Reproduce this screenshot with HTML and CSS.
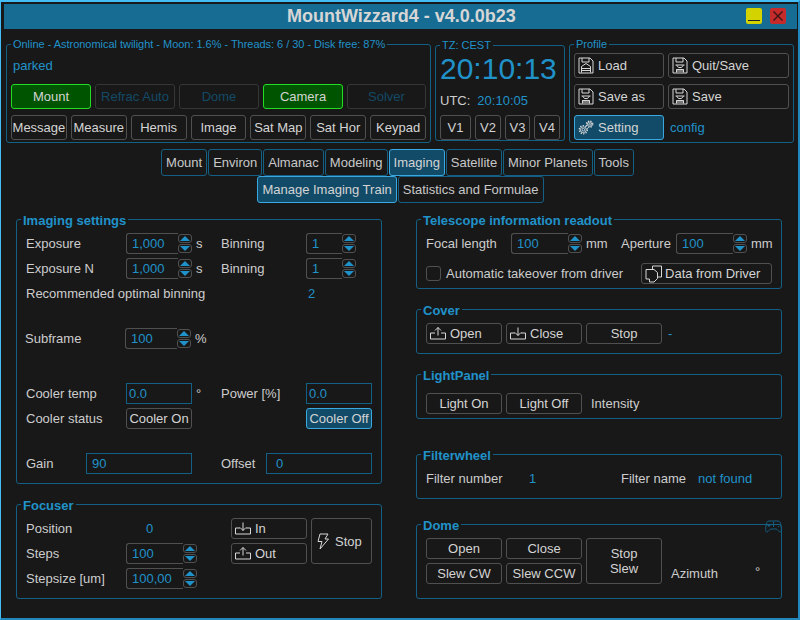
FILE: index.html
```html
<!DOCTYPE html>
<html lang="en">
<head>
    <meta charset="UTF-8">
    <meta name="viewport" content="width=device-width, initial-scale=1.0">
    <title>MountWizzard4</title>
    <link rel="stylesheet" href="styles.css">
</head>
<body>
    <svg class="sprite" width="0" height="0">
        <symbol id="i-load" viewBox="0 0 16 17">
            <path d="M1 1h11l3 3v12H1z M4 1v4h7V1 M3.500 15.500v-6L8 6.500l4.500 3v6 M3.500 11.500h9 M3.500 13.500h9"/>
        </symbol>
        <symbol id="i-save" viewBox="0 0 16 17">
            <path d="M1 1h11l3 3v12H1z M4 1v4h7V1 M3.500 8h9 M4.500 8l2 2.500h3l2-2.500 M4.500 15.500v-3h7v3 M4.500 12.500h7 M4 14h8"/>
        </symbol>
        <symbol id="i-gears" viewBox="0 0 18 17">
            <circle cx="6" cy="11" r="1.500"/>
            <circle cx="6" cy="11" r="3.300"/>
            <circle cx="6" cy="11" r="4.600" class="teeth"/>
            <circle cx="13" cy="4.800" r="1"/>
            <circle cx="13" cy="4.800" r="2.500"/>
            <circle cx="13" cy="4.800" r="3.600" class="teeth"/>
        </symbol>
        <symbol id="i-down" viewBox="0 0 16 13">
            <path d="M5 6H.5v6h15V6H11 M8 .5v8 M5 5.500l3 3 3-3"/>
        </symbol>
        <symbol id="i-up" viewBox="0 0 16 13">
            <path d="M5 6H.5v6h15V6H11 M8 8.500v-8 M5 3.500l3-3 3 3"/>
        </symbol>
        <symbol id="i-bolt" viewBox="0 0 12 17">
            <path d="M3 1h8L8 6h3.500L3 16l2-7.500H1z"/>
        </symbol>
        <symbol id="i-copy" viewBox="0 0 17 18">
            <path d="M7.500 1h9v11h-4 M7.500 1v3.500 M1 4.500h8l3.500 3v6L9 17H4.500v-3H1z"/>
        </symbol>
        <symbol id="i-pad" viewBox="0 0 17 13">
            <path d="M4 1h9c2 0 2.500 2 3 5s.5 6-1 6-2.500-3-4-3H6c-1.500 0-2.500 3-4 3S.5 9 1 6s1-5 3-5z M4 4v3 M2.500 5.500h3 M11 4.500h1 M13 6.500h1 M8.500 2v5"/>
        </symbol>
    </svg>

    <div class="window">
        <div class="titlebar">
            <span class="title">MountWizzard4 - v4.0.0b23</span>
            <button class="win-btn win-min"><span></span></button>
            <button class="win-btn win-close">
                <svg viewBox="0 0 16 16" width="16" height="16"><path d="M3.500 3.500l9 9 M12.500 3.500l-9 9"/></svg>
            </button>
        </div>

        <div class="top">
            <div class="group status">
                <div class="legend small long">Online - Astronomical twilight - Moon: 1.6% - Threads: 6 / 30 - Disk free: 87%</div>
                <div class="value parked">parked</div>
                <div class="btn-row five">
                    <button class="btn on">Mount</button>
                    <button class="btn off">Refrac Auto</button>
                    <button class="btn off">Dome</button>
                    <button class="btn on">Camera</button>
                    <button class="btn off">Solver</button>
                </div>
                <div class="btn-row">
                    <button class="btn tight">Message</button>
                    <button class="btn tight">Measure</button>
                    <button class="btn tight">Hemis</button>
                    <button class="btn tight">Image</button>
                    <button class="btn tight">Sat Map</button>
                    <button class="btn tight">Sat Hor</button>
                    <button class="btn tight">Keypad</button>
                </div>
            </div>

            <div class="group clock">
                <div class="legend small">TZ: CEST</div>
                <div class="value time">20:10:13</div>
                <div class="utc"><span>UTC:</span><span class="value">20:10:05</span></div>
                <div class="views">
                    <button class="btn">V1</button>
                    <button class="btn">V2</button>
                    <button class="btn">V3</button>
                    <button class="btn">V4</button>
                </div>
            </div>

            <div class="group profile">
                <div class="legend small">Profile</div>
                <button class="btn icon-btn"><svg class="ico"><use href="#i-load"/></svg>Load</button>
                <button class="btn icon-btn"><svg class="ico"><use href="#i-save"/></svg>Quit/Save</button>
                <button class="btn icon-btn"><svg class="ico"><use href="#i-save"/></svg>Save as</button>
                <button class="btn icon-btn"><svg class="ico"><use href="#i-save"/></svg>Save</button>
                <button class="btn icon-btn active"><svg class="ico"><use href="#i-gears"/></svg>Setting</button>
                <div class="value config">config</div>
            </div>
        </div>

        <div class="tabs">
            <div class="tab">Mount</div>
            <div class="tab">Environ</div>
            <div class="tab">Almanac</div>
            <div class="tab">Modeling</div>
            <div class="tab selected">Imaging</div>
            <div class="tab">Satellite</div>
            <div class="tab">Minor Planets</div>
            <div class="tab">Tools</div>
        </div>
        <div class="tabs sub">
            <div class="tab selected">Manage Imaging Train</div>
            <div class="tab">Statistics and Formulae</div>
        </div>

        <div class="columns">
            <div class="col">
                <div class="group imaging">
                    <div class="legend">Imaging settings</div>

                    <div class="lbl">Exposure</div>
                    <div class="spin"><div class="spin-val">1,000</div><div class="arrows"><i class="up"></i><i class="dn"></i></div></div>
                    <div class="lbl unit">s</div>
                    <div class="lbl">Binning</div>
                    <div class="spin short"><div class="spin-val">1</div><div class="arrows"><i class="up"></i><i class="dn"></i></div></div>

                    <div class="lbl">Exposure N</div>
                    <div class="spin"><div class="spin-val">1,000</div><div class="arrows"><i class="up"></i><i class="dn"></i></div></div>
                    <div class="lbl unit">s</div>
                    <div class="lbl">Binning</div>
                    <div class="spin short"><div class="spin-val">1</div><div class="arrows"><i class="up"></i><i class="dn"></i></div></div>

                    <div class="lbl span4">Recommended optimal binning</div>
                    <div class="lbl value bin-val">2</div>

                    <div class="spacer"></div>

                    <div class="lbl shift">Subframe</div>
                    <div class="spin shift"><div class="spin-val">100</div><div class="arrows"><i class="up"></i><i class="dn"></i></div></div>
                    <div class="lbl unit shift span3">%</div>

                    <div class="spacer"></div>

                    <div class="lbl">Cooler temp</div>
                    <div class="field">0.0</div>
                    <div class="lbl unit">°</div>
                    <div class="lbl">Power [%]</div>
                    <div class="field">0.0</div>

                    <div class="lbl">Cooler status</div>
                    <button class="btn">Cooler On</button>
                    <div class="span2"></div>
                    <button class="btn active">Cooler Off</button>

                    <div class="spacer"></div>

                    <div class="gain">
                        <div class="lbl">Gain</div>
                        <div class="field pad-s">90</div>
                        <div></div>
                        <div class="lbl">Offset</div>
                        <div class="field pad">0</div>
                    </div>
                </div>

                <div class="group focuser">
                    <div class="legend">Focuser</div>

                    <div class="lbl">Position</div>
                    <div class="lbl value pos-val">0</div>
                    <div></div>
                    <button class="btn icon-btn"><svg class="ico tray"><use href="#i-down"/></svg>In</button>
                    <button class="btn icon-btn stop"><svg class="ico bolt"><use href="#i-bolt"/></svg>Stop</button>

                    <div class="lbl">Steps</div>
                    <div class="spin"><div class="spin-val">100</div><div class="arrows"><i class="up"></i><i class="dn"></i></div></div>
                    <div></div>
                    <button class="btn icon-btn"><svg class="ico tray"><use href="#i-up"/></svg>Out</button>

                    <div class="lbl">Stepsize [um]</div>
                    <div class="spin"><div class="spin-val">100,00</div><div class="arrows"><i class="up"></i><i class="dn"></i></div></div>
                </div>
            </div>

            <div class="col">
                <div class="group telescope">
                    <div class="legend">Telescope information readout</div>
                    <div class="scope-row">
                        <div class="lbl">Focal length</div>
                        <div class="spin"><div class="spin-val">100</div><div class="arrows"><i class="up"></i><i class="dn"></i></div></div>
                        <div class="lbl unit">mm</div>
                        <div class="lbl">Aperture</div>
                        <div class="spin"><div class="spin-val">100</div><div class="arrows"><i class="up"></i><i class="dn"></i></div></div>
                        <div class="lbl unit">mm</div>
                    </div>
                    <div class="driver-row">
                        <div class="check"></div>
                        <div class="lbl">Automatic takeover from driver</div>
                        <button class="btn icon-btn driver"><svg class="ico copy"><use href="#i-copy"/></svg>Data from Driver</button>
                    </div>
                </div>

                <div class="group cover">
                    <div class="legend">Cover</div>
                    <button class="btn icon-btn"><svg class="ico tray"><use href="#i-up"/></svg>Open</button>
                    <button class="btn icon-btn"><svg class="ico tray"><use href="#i-down"/></svg>Close</button>
                    <button class="btn">Stop</button>
                    <div class="lbl value dash">-</div>
                </div>

                <div class="group light">
                    <div class="legend">LightPanel</div>
                    <button class="btn">Light On</button>
                    <button class="btn">Light Off</button>
                    <div class="lbl intensity">Intensity</div>
                </div>

                <div class="group filter">
                    <div class="legend">Filterwheel</div>
                    <div class="lbl">Filter number</div>
                    <div class="lbl value">1</div>
                    <div class="lbl">Filter name</div>
                    <div class="lbl value">not found</div>
                </div>

                <div class="group dome">
                    <div class="legend">Dome</div>
                    <svg class="pad-ico"><use href="#i-pad"/></svg>
                    <button class="btn">Open</button>
                    <button class="btn">Close</button>
                    <button class="btn stop-slew">Stop<br>Slew</button>
                    <div></div>
                    <button class="btn">Slew CW</button>
                    <button class="btn">Slew CCW</button>
                    <div class="az">
                        <div class="lbl">Azimuth</div>
                        <div class="az-deg">°</div>
                    </div>
                </div>
            </div>
        </div>
    </div>
</body>
</html>
```

FILE: styles.css
```css
* {
    box-sizing: border-box;
}

body {
    margin: 0;
    background-color: #181818;
    color: #cdcdcd;
    font-family: "Liberation Sans", Arial, sans-serif;
    font-size: 13px;
}

.sprite {
    position: absolute;
}

symbol path,
symbol circle {
    fill: none;
    stroke: currentColor;
    stroke-width: 1;
}

symbol .teeth {
    stroke-width: 1.4;
    stroke-dasharray: 1.5 1.4;
}

.window {
    width: 800px;
    height: 620px;
    overflow: hidden;
    background-color: #181818;
    border: 2px solid #2088bc;
    border-top-color: #44bdf6;
    border-left-color: #44bdf6;
    border-left-width: 1px;
}

.titlebar {
    position: relative;
    display: flex;
    align-items: center;
    justify-content: flex-end;
    gap: 8px;
    height: 25px;
    margin: 2px 1px 0 3px;
    padding: 0 11px 1px 0;
    background-color: #176c93;
}

.title {
    position: absolute;
    left: 283px;
    top: 2px;
    font-size: 18px;
    line-height: 21px;
    font-weight: bold;
    color: #d6d6d6;
    white-space: nowrap;
}

.win-btn {
    display: flex;
    align-items: flex-end;
    justify-content: center;
    width: 16px;
    height: 16px;
    padding: 0;
    border: none;
    border-radius: 2px;
}

.win-min {
    background-color: #d3d300;
}

.win-min span {
    width: 12px;
    height: 1px;
    margin-bottom: 3px;
    background-color: #222;
}

.win-close {
    background-color: #c62b2b;
}

.win-close path {
    fill: none;
    stroke: #3a1414;
    stroke-width: 1.4;
}

.top {
    display: flex;
    align-items: flex-start;
    gap: 4px;
    margin: 15px 0 0 5px;
}

.group {
    position: relative;
    border: 1px solid #145f84;
    border-radius: 3px;
}

.legend {
    position: absolute;
    left: 4px;
    top: -7px;
    padding: 0 2px;
    line-height: 15px;
    font-weight: bold;
    color: #2092ca;
    background-color: #181818;
    white-space: nowrap;
}

.legend.small {
    top: -8px;
    font-size: 11px;
    font-weight: normal;
}

.legend.long {
    letter-spacing: -0.03px;
}

.value {
    color: #2092ca;
}

.btn {
    height: 21px;
    padding: 0;
    font-family: inherit;
    font-size: 13px;
    color: #d4d4d4;
    background-color: #181818;
    border: 1px solid #505050;
    border-radius: 3px;
    white-space: nowrap;
}

.btn.on {
    background-color: #005400;
    border-color: #22dd22;
}

.btn.off {
    color: #134a66;
    border-color: #363636;
}

.btn.active {
    background-color: #124b68;
    border-color: #3aa9e2;
}

.icon-btn {
    display: flex;
    align-items: center;
    padding-left: 3px;
    gap: 4px;
}

.ico {
    width: 16px;
    height: 17px;
    flex: none;
    color: #d8d8d8;
}

.ico.tray {
    height: 13px;
}

.ico.bolt {
    width: 12px;
}

.ico.copy {
    width: 17px;
    height: 18px;
}

/* top row */
.status {
    width: 425px;
    height: 99px;
    padding: 13px 4px 0;
}

.parked {
    padding-left: 2px;
    line-height: 15px;
    margin-bottom: 11px;
}

.btn-row {
    display: flex;
    gap: 4px;
    margin-bottom: 6px;
}

.btn-row .btn {
    flex: 1 1 0;
    height: 25px;
    min-width: 0;
}

.btn-row.five {
    display: grid;
    grid-template-columns: 80px 80px 80px 80px 79px;
}

.clock {
    width: 130px;
    height: 96px;
    margin-top: 1px;
    padding: 6px 4px 0;
}

.time {
    font-size: 30px;
    line-height: 34px;
}

.utc {
    display: flex;
    gap: 7px;
    margin-top: 7px;
    line-height: 15px;
}

.views {
    display: grid;
    grid-template-columns: 31px 26px 25px 26px;
    gap: 4px;
    margin-top: 7px;
}

.views .btn {
    height: 25px;
}

.profile {
    display: grid;
    grid-template-columns: 90px 121px;
    grid-auto-rows: 25px;
    gap: 6px 4px;
    width: 225px;
    height: 99px;
    padding: 8px 4px 0;
}

.profile .btn {
    height: 25px;
}

.config {
    padding-left: 2px;
    line-height: 25px;
}

/* tabs */
.tabs {
    display: flex;
    justify-content: center;
    gap: 1px;
    margin-top: 6px;
    padding-right: 4px;
}

.tabs.sub {
    margin-top: 0;
    padding: 0 0 0 2px;
}

.tab {
    height: 27px;
    padding: 0 4px;
    line-height: 26px;
    color: #c8c8c8;
    border: 1px solid #145f84;
    border-radius: 3px;
}

.tab.selected {
    color: #d4d4d4;
    background-color: #124b68;
    border-color: #3aa9e2;
}

/* main columns */
.columns {
    display: flex;
    gap: 34px;
    margin: 16px 0 0 15px;
}

.col {
    width: 366px;
}

.lbl {
    line-height: 21px;
    white-space: nowrap;
}

.unit {
    padding-left: 4px;
}

.spin {
    display: flex;
    height: 21px;
}

.spin-val {
    flex: 1;
    padding-left: 5px;
    line-height: 19px;
    color: #2092ca;
    border: 1px solid #505050;
    border-right: none;
    border-radius: 3px 0 0 3px;
}

.arrows {
    display: flex;
    flex-direction: column;
    justify-content: space-between;
    width: 14px;
    padding: 1px 0;
}

.arrows i {
    display: block;
    position: relative;
    height: 9px;
    border: 1px solid #505050;
    border-radius: 3px;
}

.arrows i::after {
    content: "";
    position: absolute;
    left: 1px;
    border-left: 5px solid transparent;
    border-right: 5px solid transparent;
}

.arrows .up::after {
    top: 1px;
    border-bottom: 5px solid #2092ca;
}

.arrows .dn::after {
    top: 1px;
    border-top: 5px solid #2092ca;
}

.field {
    height: 21px;
    padding-left: 2px;
    line-height: 19px;
    color: #2092ca;
    border: 1px solid #145f84;
}

.field.pad {
    padding-left: 9px;
}

.field.pad-s {
    padding-left: 5px;
}

.imaging {
    display: grid;
    grid-template-columns: 100px 66px 29px 85px 66px;
    grid-template-rows: 21px 21px 21px 16px 21px 26px 21px 21px 16px 21px;
    row-gap: 4px;
    height: 265px;
    padding: 13px 0 0 9px;
}

.imaging .spin.short {
    width: 50px;
}

.span4 {
    grid-column: span 4;
}

.span3 {
    grid-column: span 3;
}

.span2 {
    grid-column: span 2;
}

.spacer {
    grid-column: 1 / -1;
}

.bin-val {
    padding-left: 2px;
}

.shift {
    position: relative;
    left: -1px;
}

.gain {
    grid-column: 1 / -1;
    display: grid;
    grid-template-columns: 60px 106px 29px 45px 106px;
}

.focuser {
    display: grid;
    grid-template-columns: 100px 71px 34px 76px 61px;
    grid-template-rows: 21px 21px 21px;
    row-gap: 4px;
    height: 95px;
    margin-top: 20px;
    padding: 13px 0 0 9px;
}

.pos-val {
    padding-left: 20px;
}

.stop {
    grid-row: span 2;
    gap: 6px;
    height: 46px;
    width: 61px;
    margin-left: 4px;
    padding-left: 5px;
}

.telescope {
    height: 70px;
    padding: 13px 0 0 9px;
}

.scope-row {
    display: grid;
    grid-template-columns: 85px 71px 39px 55px 71px auto;
}

.driver-row {
    display: flex;
    margin-top: 9px;
}

.check {
    width: 15px;
    height: 15px;
    margin: 3px 5px 0 0;
    border: 1px solid #505050;
    border-radius: 3px;
}

.driver {
    gap: 3px;
    width: 131px;
    margin-left: 18px;
}

.cover,
.light {
    display: grid;
    grid-template-columns: 76px 76px 76px auto;
    column-gap: 4px;
    height: 45px;
    margin-top: 20px;
    padding: 13px 0 0 9px;
}

.light {
    padding-top: 18px;
}

.dash {
    padding-left: 2px;
}

.intensity {
    padding-left: 5px;
}

.filter {
    display: grid;
    grid-template-columns: 103px 92px 77px auto;
    height: 45px;
    margin-top: 35px;
    padding: 13px 0 0 9px;
}

.dome {
    display: grid;
    grid-template-columns: 76px 76px 76px auto;
    grid-template-rows: 21px 21px;
    gap: 4px;
    height: 75px;
    margin-top: 25px;
    padding: 13px 0 0 9px;
}

.stop-slew {
    grid-row: span 2;
    height: 46px;
    line-height: 15px;
}

.az {
    position: relative;
    padding-left: 5px;
}

.az-deg {
    position: absolute;
    left: 89px;
    top: -2px;
    line-height: 21px;
}

.pad-ico {
    position: absolute;
    right: -1px;
    top: -5px;
    width: 17px;
    height: 13px;
    color: #145f84;
}
```
